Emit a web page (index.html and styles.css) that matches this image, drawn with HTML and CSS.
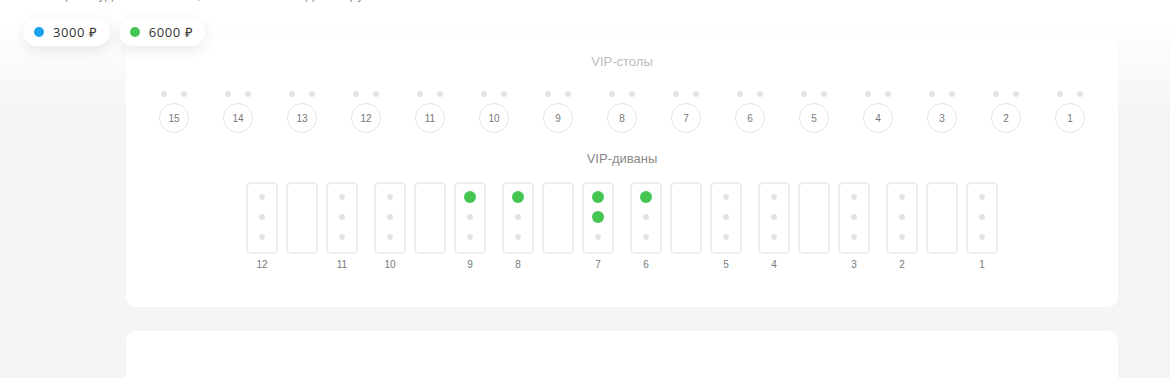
FILE: index.html
```html
<!doctype html>
<html>

<head>
    <meta charset="utf-8">
    <meta name="viewport" content="width=device-width, initial-scale=1.0">
    <title>Схема зала</title>
    <link rel="stylesheet" href="styles.css">
</head>

<body>
    <p class="hint">Выберите удобные места, нажав на свободный кружок на схеме зала</p>

    <!-- Легенда цен -->
    <div class="legend">
        <div class="price-pill"><span class="dot dot-blue"></span>3000 ₽</div>
        <div class="price-pill"><span class="dot dot-green"></span>6000 ₽</div>
    </div>

    <div class="hall">
        <!-- Карточка со схемой -->
        <div class="card">
            <h3 class="zone-title">VIP-столы</h3>
            <ul class="tables">
                <li class="table"><span class="chairs"><i></i><i></i></span><span class="circle">15</span></li>
                <li class="table"><span class="chairs"><i></i><i></i></span><span class="circle">14</span></li>
                <li class="table"><span class="chairs"><i></i><i></i></span><span class="circle">13</span></li>
                <li class="table"><span class="chairs"><i></i><i></i></span><span class="circle">12</span></li>
                <li class="table"><span class="chairs"><i></i><i></i></span><span class="circle">11</span></li>
                <li class="table"><span class="chairs"><i></i><i></i></span><span class="circle">10</span></li>
                <li class="table"><span class="chairs"><i></i><i></i></span><span class="circle">9</span></li>
                <li class="table"><span class="chairs"><i></i><i></i></span><span class="circle">8</span></li>
                <li class="table"><span class="chairs"><i></i><i></i></span><span class="circle">7</span></li>
                <li class="table"><span class="chairs"><i></i><i></i></span><span class="circle">6</span></li>
                <li class="table"><span class="chairs"><i></i><i></i></span><span class="circle">5</span></li>
                <li class="table"><span class="chairs"><i></i><i></i></span><span class="circle">4</span></li>
                <li class="table"><span class="chairs"><i></i><i></i></span><span class="circle">3</span></li>
                <li class="table"><span class="chairs"><i></i><i></i></span><span class="circle">2</span></li>
                <li class="table"><span class="chairs"><i></i><i></i></span><span class="circle">1</span></li>
            </ul>

            <h3 class="zone-title zone-title-dark">VIP-диваны</h3>
            <div class="sofas">
                <div class="sofa-group">
                    <div class="sofa-item"><div class="sofa"><b class="seat"></b><b class="seat"></b><b class="seat"></b></div><span class="num">12</span></div>
                    <div class="sofa-item"><div class="sofa"></div><span class="num"></span></div>
                    <div class="sofa-item"><div class="sofa"><b class="seat"></b><b class="seat"></b><b class="seat"></b></div><span class="num">11</span></div>
                </div>
                <div class="sofa-group">
                    <div class="sofa-item"><div class="sofa"><b class="seat"></b><b class="seat"></b><b class="seat"></b></div><span class="num">10</span></div>
                    <div class="sofa-item"><div class="sofa"></div><span class="num"></span></div>
                    <div class="sofa-item"><div class="sofa"><b class="seat busy"></b><b class="seat"></b><b class="seat"></b></div><span class="num">9</span></div>
                </div>
                <div class="sofa-group">
                    <div class="sofa-item"><div class="sofa"><b class="seat busy"></b><b class="seat"></b><b class="seat"></b></div><span class="num">8</span></div>
                    <div class="sofa-item"><div class="sofa"></div><span class="num"></span></div>
                    <div class="sofa-item"><div class="sofa"><b class="seat busy"></b><b class="seat busy"></b><b class="seat"></b></div><span class="num">7</span></div>
                </div>
                <div class="sofa-group">
                    <div class="sofa-item"><div class="sofa"><b class="seat busy"></b><b class="seat"></b><b class="seat"></b></div><span class="num">6</span></div>
                    <div class="sofa-item"><div class="sofa"></div><span class="num"></span></div>
                    <div class="sofa-item"><div class="sofa"><b class="seat"></b><b class="seat"></b><b class="seat"></b></div><span class="num">5</span></div>
                </div>
                <div class="sofa-group">
                    <div class="sofa-item"><div class="sofa"><b class="seat"></b><b class="seat"></b><b class="seat"></b></div><span class="num">4</span></div>
                    <div class="sofa-item"><div class="sofa"></div><span class="num"></span></div>
                    <div class="sofa-item"><div class="sofa"><b class="seat"></b><b class="seat"></b><b class="seat"></b></div><span class="num">3</span></div>
                </div>
                <div class="sofa-group">
                    <div class="sofa-item"><div class="sofa"><b class="seat"></b><b class="seat"></b><b class="seat"></b></div><span class="num">2</span></div>
                    <div class="sofa-item"><div class="sofa"></div><span class="num"></span></div>
                    <div class="sofa-item"><div class="sofa"><b class="seat"></b><b class="seat"></b><b class="seat"></b></div><span class="num">1</span></div>
                </div>
            </div>
        </div>

        <!-- Следующая карточка -->
        <div class="card card-next"></div>
    </div>
</body>

</html>
```

FILE: styles.css
```css
body {
    font-family: "Liberation Sans", Arial, sans-serif;
    margin: 0;
    padding: 0;
    background: linear-gradient(#ffffff 0, #ffffff 20px, #f5f5f5 110px) no-repeat, #f5f5f5;
    min-height: 378px;
    position: relative;
    overflow: hidden;
}

.hint {
    margin: -14px 0 0 30px;
    font-size: 14px;
    line-height: 16px;
    color: #999;
}

.legend {
    position: absolute;
    top: 18px;
    left: 23px;
    display: flex;
    gap: 9px;
    z-index: 2;
}

.price-pill {
    display: flex;
    align-items: center;
    gap: 9px;
    height: 28px;
    padding: 0 12px 0 11px;
    background: #fff;
    border-radius: 14px;
    box-shadow: 0 4px 14px rgba(0, 0, 0, 0.09);
    font-family: "Open Sans", sans-serif;
    font-size: 13px;
    color: #333;
    letter-spacing: 0.6px;
}

.dot {
    width: 10px;
    height: 10px;
    border-radius: 50%;
}

.dot-blue {
    background-color: #17a4ee;
}

.dot-green {
    background-color: #45c652;
}

.hall {
    width: 992px;
    margin: 33px 0 0 126px;
}

.card {
    background: #fff;
    border-radius: 10px;
    padding: 19px 0 36px;
}

.card-next {
    margin-top: 24px;
    height: 60px;
    padding: 0;
}

.zone-title {
    margin: 0;
    text-align: center;
    font-size: 13px;
    line-height: 16px;
    font-weight: normal;
    color: #bdbdbd;
}

.zone-title-dark {
    margin-top: 18px;
    color: #8a8a8a;
}

.tables {
    list-style: none;
    display: flex;
    justify-content: center;
    padding: 0;
    margin: 21px 0 0;
}

.table {
    width: 64px;
    display: flex;
    flex-direction: column;
    align-items: center;
}

.chairs {
    display: flex;
    gap: 14px;
    margin-bottom: 6px;
}

.chairs i {
    width: 6px;
    height: 6px;
    border-radius: 50%;
    background: #e3e3e3;
}

.circle {
    width: 30px;
    height: 30px;
    box-sizing: border-box;
    border: 1px solid #e4e4e4;
    border-radius: 50%;
    display: flex;
    justify-content: center;
    align-items: center;
    font-size: 10px;
    color: #777;
}

.sofas {
    display: flex;
    justify-content: center;
    gap: 16px;
    margin-top: 15px;
}

.sofa-group {
    display: flex;
    gap: 8px;
}

.sofa-item {
    display: flex;
    flex-direction: column;
    align-items: center;
    width: 32px;
}

.sofa {
    width: 32px;
    height: 72px;
    box-sizing: border-box;
    border: 2px solid #ededed;
    border-radius: 5px;
    padding-top: 7px;
    display: flex;
    flex-direction: column;
    align-items: center;
    gap: 8px;
}

.seat {
    width: 12px;
    height: 12px;
    display: flex;
    justify-content: center;
    align-items: center;
}

.seat::after {
    content: "";
    width: 6px;
    height: 6px;
    border-radius: 50%;
    background: #e3e3e3;
}

.seat.busy::after {
    width: 12px;
    height: 12px;
    background: #45c652;
}

.num {
    margin-top: 5px;
    height: 12px;
    font-size: 10px;
    line-height: 12px;
    color: #777;
}
```
